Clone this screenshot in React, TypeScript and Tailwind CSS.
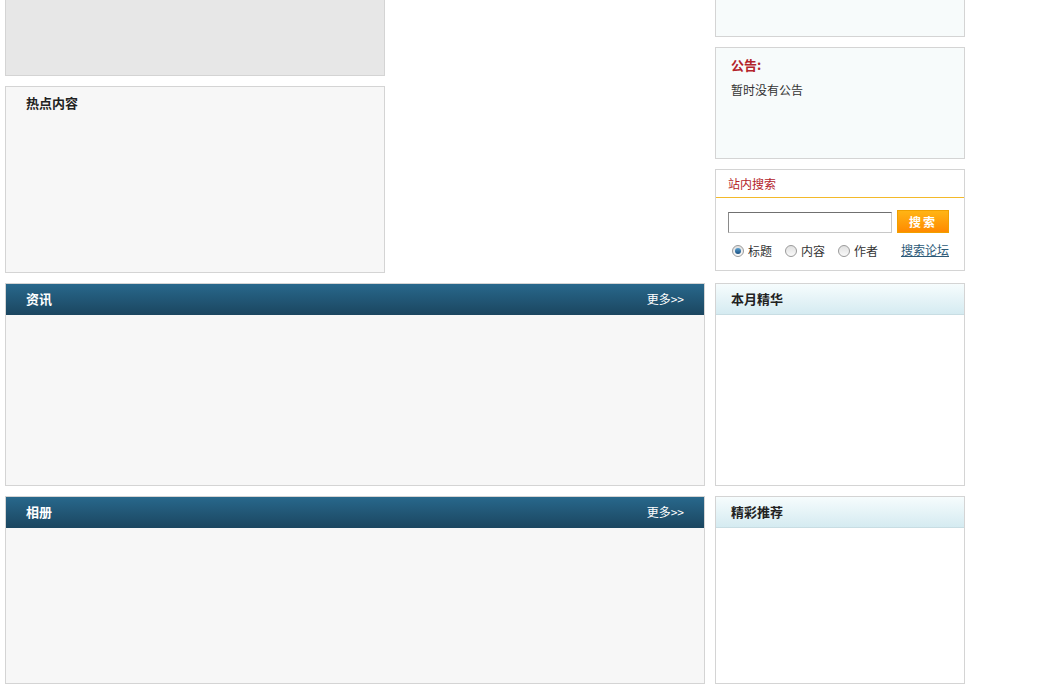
const font = "font-['Noto_Sans_CJK_SC','Noto_Sans',sans-serif]"

function DarkPanel({ title, height }: { title: string; height: string }) {
    return (
        <div className={`w-[700px] ${height} border border-[#d4d4d4] bg-[#f7f7f7] flex flex-col`}>
            <div className="h-[31px] shrink-0 bg-gradient-to-b from-[#28688c] to-[#1b4660] flex items-center justify-between pl-[20px] pr-[20px] pb-[2px]">
                <span className="text-[13px] font-bold text-white leading-none">{title}</span>
                <a className="text-[12px] text-white leading-none cursor-pointer">更多&gt;&gt;</a>
            </div>
        </div>
    )
}

function LightPanel({ title, height }: { title: string; height: string }) {
    return (
        <div className={`w-[250px] ${height} border border-[#d4d4d4] bg-white flex flex-col`}>
            <div className="h-[31px] shrink-0 bg-gradient-to-b from-[#f6fcfd] to-[#d5ebf1] border-b border-[#c8dde3] flex items-center pl-[15px] pb-px">
                <span className="text-[13px] font-bold text-[#222] leading-none">{title}</span>
            </div>
        </div>
    )
}

function Radio({ label, checked }: { label: string; checked?: boolean }) {
    return (
        <label className="flex items-center gap-[4px] text-[12px] text-[#333] leading-none">
            <span className="w-[12px] h-[12px] rounded-full border border-[#9a9a9a] bg-gradient-to-b from-[#e0e0e0] to-[#fafafa] flex items-center justify-center">
                {checked && <span className="w-[6px] h-[6px] rounded-full bg-gradient-to-b from-[#5aa0d0] to-[#1a4f80]" />}
            </span>
            {label}
        </label>
    )
}

export default function App() {
    return (
        <div className={`w-[1047px] h-[689px] overflow-hidden bg-white ${font}`}>
            <div className="pl-[5px] w-[965px]">
                {/* Top area */}
                <div className="flex items-start gap-[10px]">
                    <div className="w-[700px] flex flex-col gap-[10px]">
                        <div className="w-[380px] h-[77px] -mt-px border border-[#d4d4d4] bg-[#e7e7e7]" />
                        <div className="w-[380px] h-[187px] border border-[#d4d4d4] bg-[#f7f7f7] pl-[20px] pt-[8px]">
                            <div className="text-[13px] font-bold text-[#222] leading-[16px]">热点内容</div>
                        </div>
                    </div>

                    <div className="w-[250px] flex flex-col gap-[10px]">
                        <div className="h-[38px] -mt-px border border-[#d4d4d4] bg-[#f7fbfb]" />

                        {/* Notice */}
                        <div className="h-[112px] border border-[#d4d4d4] bg-[#f7fbfb] pl-[15px] pt-[9px]">
                            <div className="text-[13px] font-bold text-[#b3242b] leading-[16px]">公告:</div>
                            <div className="mt-[9px] text-[12px] text-[#333] leading-[16px]">暂时没有公告</div>
                        </div>

                        {/* Search */}
                        <div className="h-[102px] border border-[#d4d4d4] bg-white">
                            <div className="h-[27px] flex items-center pl-[12px]">
                                <span className="text-[12px] text-[#b3242b] leading-none">站内搜索</span>
                            </div>
                            <div className="h-px bg-[#f3b92a]" />
                            <div className="pl-[12px] pr-[15px] pt-[12px]">
                                <div className="flex items-end gap-[5px]">
                                    <input
                                        type="text"
                                        className="w-[164px] h-[21px] border border-[#c8c8c8] border-t-[#707070] border-l-[#8a8a8a] bg-white outline-none"
                                    />
                                    <button className="w-[54px] h-[23px] bg-gradient-to-b from-[#ffb414] to-[#ff8a00] border border-[#f0a000] text-white text-[12px] font-bold tracking-[2px] leading-none">
                                        搜索
                                    </button>
                                </div>
                                <div className="mt-[12px] flex items-center">
                                    <div className="flex items-center gap-[13px] pl-[4px]">
                                        <Radio label="标题" checked />
                                        <Radio label="内容" />
                                        <Radio label="作者" />
                                    </div>
                                    <a className="ml-auto text-[12px] text-[#2c5a78] underline leading-none cursor-pointer -mt-[3px]">搜索论坛</a>
                                </div>
                            </div>
                        </div>
                    </div>
                </div>

                {/* Rows */}
                <div className="mt-[10px] flex gap-[10px]">
                    <DarkPanel title="资讯" height="h-[203px]" />
                    <LightPanel title="本月精华" height="h-[203px]" />
                </div>
                <div className="mt-[10px] flex gap-[10px]">
                    <DarkPanel title="相册" height="h-[188px]" />
                    <LightPanel title="精彩推荐" height="h-[188px]" />
                </div>
            </div>
        </div>
    )
}
